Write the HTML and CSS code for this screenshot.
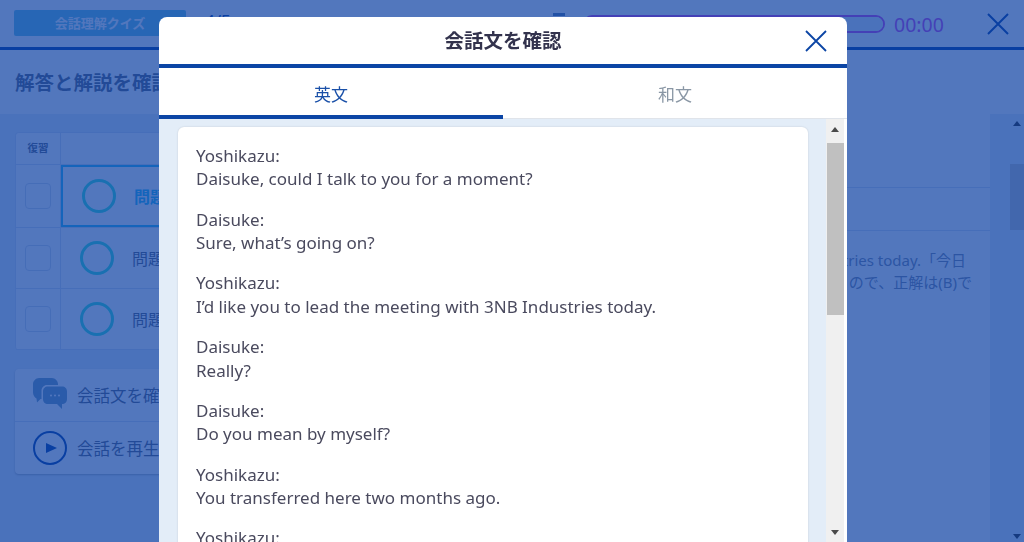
FILE: index.html
```html
<!DOCTYPE html>
<html lang="ja">
<head>
    <meta charset="UTF-8">
    <meta name="viewport" content="width=device-width, initial-scale=1.0">
    <title>会話文を確認</title>
    <link rel="stylesheet" href="styles.css">
</head>
<body>
    <div class="page">
        <header class="top-bar">
            <div class="quiz-label">会話理解クイズ</div>
            <div class="top-count">4/5</div>
            <svg class="stopwatch" viewBox="0 0 12 20"><rect x="0" y="0" width="12" height="3"/></svg>
            <div class="progress"><div class="progress-fill"></div></div>
            <div class="timer">00:00</div>
            <svg class="top-close" viewBox="0 0 22 22"><path d="M1 1L21 21M21 1L1 21"/></svg>
        </header>
        <div class="title-bar">解答と解説を確認しましょう</div>
        <main class="main">
            <div class="left-col">
                <div class="table-card">
                    <div class="table-head"><div class="head-check">復習</div></div>
                    <div class="q-row q-row-first">
                        <div class="check-cell"><span class="check"></span></div>
                        <div class="q-cell q-selected"><span class="ring"></span><span class="q-name">問題 1</span></div>
                    </div>
                    <div class="q-row">
                        <div class="check-cell"><span class="check"></span></div>
                        <div class="q-cell"><span class="ring"></span><span class="q-name">問題 2</span></div>
                    </div>
                    <div class="q-row">
                        <div class="check-cell"><span class="check"></span></div>
                        <div class="q-cell"><span class="ring"></span><span class="q-name">問題 3</span></div>
                    </div>
                </div>
                <div class="action-card">
                    <div class="action-row">
                        <svg class="action-icon" viewBox="0 0 34 34">
                            <path class="bubble" d="M6 0H19C22 0 25 3 25 6V7H14C11 7 8.500 9.500 8.500 12.500V21H7.500L4 24.500L3.500 20.500C1.500 19.500 0 17 0 14.500V6C0 3 3 0 6 0Z"/>
                            <path class="bubble" d="M15 8.500H29C32 8.500 34 10.500 34 13.500V21C34 24 32 26 29 26V31L24 26H15C12 26 10 24 10 21V13.500C10 10.500 12 8.500 15 8.500Z"/>
                            <circle class="bubble-dot" cx="18" cy="17.500" r="1"/>
                            <circle class="bubble-dot" cx="22" cy="17.500" r="1"/>
                            <circle class="bubble-dot" cx="26" cy="17.500" r="1"/>
                        </svg>
                        <span>会話文を確認</span>
                    </div>
                    <div class="action-row">
                        <svg class="action-icon" viewBox="0 0 34 34">
                            <circle class="play-ring" cx="17" cy="17" r="16"/>
                            <path class="play-tri" d="M13 12L24 17L13 22Z"/>
                        </svg>
                        <span>会話を再生</span>
                    </div>
                </div>
            </div>
            <div class="right-col">
                <div class="right-head"></div>
                <div class="right-sub"></div>
                <div class="right-text">
                    <div class="right-line right-line-first">I'd like you to lead the meeting with 3NB Industries today.「今日</div>
                    <div class="right-line">の会議を進めてほしい」と言っているので、正解は(B)で</div>
                </div>
            </div>
            <div class="page-scroll">
                <div class="page-arrow-up"></div>
                <div class="page-thumb"></div>
                <div class="page-arrow-down"></div>
            </div>
        </main>
    </div>

    <div class="overlay"></div>

    <div class="modal">
        <div class="modal-head">
            <h2>会話文を確認</h2>
            <svg class="modal-close" viewBox="0 0 22 22"><path d="M1 1L21 21M21 1L1 21"/></svg>
        </div>
        <div class="tabs">
            <div class="tab tab-active">英文</div>
            <div class="tab">和文</div>
        </div>
        <div class="modal-body">
            <div class="script-wrap">
                <div class="script-card">
                    <p>Yoshikazu:<br>Daisuke, could I talk to you for a moment?</p>
                    <p>Daisuke:<br>Sure, what’s going on?</p>
                    <p>Yoshikazu:<br>I’d like you to lead the meeting with 3NB Industries today.</p>
                    <p>Daisuke:<br>Really?</p>
                    <p>Daisuke:<br>Do you mean by myself?</p>
                    <p>Yoshikazu:<br>You transferred here two months ago.</p>
                    <p>Yoshikazu:</p>
                </div>
            </div>
            <div class="modal-scroll">
                <div class="arrow-up"></div>
                <div class="modal-thumb"></div>
                <div class="arrow-down"></div>
            </div>
        </div>
    </div>
</body>
</html>
```

FILE: styles.css
```css
html, body {
    margin: 0;
    height: 100%;
    overflow: hidden;
}
body {
    font-family: "Noto Sans", "Noto Sans CJK JP", sans-serif;
    color: #33334d;
    background-color: #fff;
}
.page {
    height: 542px;
    display: flex;
    flex-direction: column;
}

/* top bar */
.top-bar {
    height: 47px;
    flex: none;
    border-bottom: 3px solid #0b45a5;
    display: flex;
    align-items: flex-start;
    padding-left: 14px;
}
.quiz-label {
    width: 172px;
    height: 26px;
    margin-top: 10px;
    border-radius: 2px;
    background-color: #6fc5e5;
    color: #fff;
    font-size: 13px;
    font-weight: 700;
    line-height: 26px;
    text-align: center;
}
.top-count {
    width: 348px;
    margin: 9px 0 0 19px;
    color: #0b45a5;
    font-size: 17px;
    line-height: 24px;
}
.stopwatch {
    width: 12px;
    height: 20px;
    margin: 13px 18px 0 0;
    fill: #5a7fb0;
}
.progress {
    width: 298px;
    height: 14px;
    margin-top: 15px;
    border: 2px solid #d048e8;
    border-radius: 9px;
}
.progress-fill {
    height: 100%;
    border-radius: 7px;
    background-color: #e4edf7;
}
.timer {
    margin: 8px 0 0 9px;
    color: #d048e8;
    font-size: 19.500px;
    line-height: 33px;
    width: 50px;
}
.top-close {
    width: 22px;
    height: 22px;
    margin: 13px 0 0 43px;
    fill: none;
    stroke: #0b45a5;
    stroke-width: 2;
}

/* title */
.title-bar {
    height: 64px;
    flex: none;
    padding-left: 15px;
    font-size: 19.500px;
    font-weight: 700;
    line-height: 66px;
    color: #5f6a80;
    white-space: nowrap;
}

/* main */
.main {
    flex: 1;
    display: flex;
    background-color: #e4edf7;
    min-height: 0;
}
.left-col {
    width: 400px;
    padding: 18px 0 0 15px;
    flex: none;
}
.table-card {
    background-color: #fff;
    border: 1px solid #d8e2f0;
    border-bottom: 0;
    border-radius: 4px;
}
.table-head {
    height: 31px;
    border-bottom: 1px solid #d8e2f0;
}
.head-check {
    width: 44px;
    height: 31px;
    line-height: 31px;
    text-align: center;
    font-size: 10.500px;
    font-weight: 700;
    color: #5f6a80;
    border-right: 1px solid #d8e2f0;
}
.q-row {
    height: 60px;
    display: flex;
    border-bottom: 1px solid #d8e2f0;
}
.q-row-first {
    height: 62px;
}
.check-cell {
    width: 44px;
    flex: none;
    border-right: 1px solid #d8e2f0;
    display: flex;
    align-items: center;
    justify-content: center;
}
.check {
    width: 24px;
    height: 24px;
    border: 1px solid #d3dcea;
    border-radius: 4px;
}
.q-cell {
    flex: 1;
    display: flex;
    align-items: center;
    padding-left: 19px;
    font-size: 16px;
    color: #5f6a80;
}
.q-selected {
    border: 2px solid #30c0f8;
    font-weight: 700;
    color: #30c0f8;
}
.ring {
    width: 28px;
    height: 28px;
    border: 3px solid #40e6d8;
    border-radius: 50%;
    margin-right: 18px;
}
.action-card {
    margin-top: 19px;
    background-color: #fff;
    border-radius: 4px;
    box-shadow: 0 1px 2px rgba(0, 0, 0, 0.25);
}
.action-row {
    height: 52px;
    display: flex;
    align-items: center;
    padding-left: 18px;
    font-size: 16.500px;
    color: #5f6a80;
    white-space: nowrap;
}
.action-row + .action-row {
    border-top: 1px solid #d8e2f0;
}
.action-icon {
    width: 34px;
    height: 34px;
    margin-right: 10px;
}
.bubble { fill: #7aa0c0; }
.bubble-dot { fill: #fff; }
.play-ring {
    fill: none;
    stroke: #0b45a5;
    stroke-width: 2;
}
.play-tri { fill: #0b45a5; }

.right-col {
    flex: 1;
    background-color: #fff;
    font-size: 15px;
    line-height: 22px;
    color: #808ca8;
    min-width: 0;
    overflow: hidden;
}
.right-head {
    height: 73px;
    border-bottom: 1px solid #d8e2f0;
}
.right-sub {
    height: 42px;
    border-bottom: 1px solid #d8e2f0;
}
.right-text {
    margin-top: 18px;
    padding-right: 18px;
    display: flex;
    flex-direction: column;
    align-items: flex-end;
}
.right-line {
    white-space: nowrap;
}
.right-line-first {
    margin-right: 6px;
}
.page-scroll {
    width: 14px;
    margin-left: 20px;
    flex: none;
    position: relative;
}
.page-thumb {
    height: 66px;
    margin-top: 50px;
    background-color: #c9c9c9;
}
.page-arrow-up, .page-arrow-down {
    position: absolute;
    left: 3px;
    width: 0;
    height: 0;
    border-left: 4px solid transparent;
    border-right: 4px solid transparent;
}
.page-arrow-up {
    top: 7px;
    border-bottom: 5px solid #333;
}
.page-arrow-down {
    bottom: 3px;
    border-top: 5px solid #333;
}

/* dim layer and dialog */
.overlay {
    position: fixed;
    top: 0;
    left: 0;
    width: 100%;
    height: 100%;
    background-color: rgba(8, 61, 161, 0.7);
}
.modal {
    position: fixed;
    top: 17px;
    left: 159px;
    width: 688px;
    height: 525px;
    background-color: #fff;
    border-radius: 8px 8px 0 0;
    display: flex;
    flex-direction: column;
    overflow: hidden;
}
.modal-head {
    height: 47px;
    flex: none;
    border-bottom: 4px solid #0b45a5;
    display: flex;
    align-items: center;
    justify-content: center;
    position: relative;
}
.modal-head h2 {
    margin: 0 0 2px;
    font-size: 19.500px;
    font-weight: 700;
    color: #33334d;
}
.modal-close {
    position: absolute;
    top: 13px;
    right: 20px;
    width: 22px;
    height: 22px;
    fill: none;
    stroke: #0b45a5;
    stroke-width: 1.800;
}
.tabs {
    height: 51px;
    flex: none;
    display: flex;
}
.tab {
    width: 344px;
    text-align: center;
    font-size: 17px;
    line-height: 54px;
    color: #8a97a5;
    box-shadow: inset 0 -1px #e0e4ea;
}
.tab-active {
    height: 47px;
    border-bottom: 4px solid #0b45a5;
    color: #1a50a8;
    box-shadow: none;
}
.modal-body {
    flex: 1;
    display: flex;
    min-height: 0;
    padding-right: 3px;
}
.script-wrap {
    flex: 1;
    background-color: #e3edf8;
    padding: 8px 18px 0 19px;
    overflow: hidden;
    min-width: 0;
}
.script-card {
    background-color: #fff;
    border-radius: 6px;
    box-shadow: 0 0 2px rgba(0, 0, 0, 0.15);
    padding: 17px 18px;
    font-size: 17px;
    line-height: 23.400px;
    color: #4a4a5e;
}
.script-card p {
    margin: 0 0 16.900px;
}
.modal-scroll {
    width: 18px;
    flex: none;
    background-color: #f0f0f0;
    position: relative;
}
.modal-thumb {
    height: 172px;
    margin-top: 24px;
    margin-left: 1px;
    background-color: #c0c0c0;
}
.arrow-up, .arrow-down {
    position: absolute;
    left: 5px;
    width: 0;
    height: 0;
    border-left: 4px solid transparent;
    border-right: 4px solid transparent;
}
.arrow-up {
    top: 8px;
    border-bottom: 5px solid #4a4a4a;
}
.arrow-down {
    bottom: 7px;
    border-top: 5px solid #4a4a4a;
}
```
